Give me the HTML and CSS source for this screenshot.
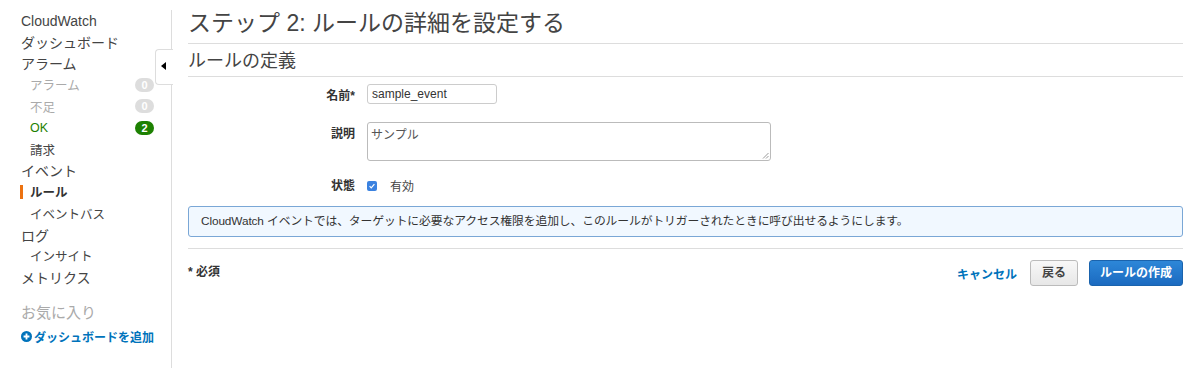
FILE: index.html
```html
<!DOCTYPE html>
<html>
	<head>
		<meta charset="utf-8">
		<title>CloudWatch ルールの詳細</title>
		<link rel="stylesheet" href="styles.css">
	</head>
	<body>
		<div class="page">
			<div class="sidebar">
				<div class="nav top">CloudWatch</div>
				<div class="nav top">ダッシュボード</div>
				<div class="nav top">アラーム</div>
				<div class="nav sub muted">アラーム <span class="badge">0</span></div>
				<div class="nav sub muted">不足 <span class="badge">0</span></div>
				<div class="nav sub ok">OK <span class="badge green">2</span></div>
				<div class="nav sub">請求</div>
				<div class="nav top">イベント</div>
				<div class="nav sub active">ルール</div>
				<div class="nav sub">イベントバス</div>
				<div class="nav top">ログ</div>
				<div class="nav sub">インサイト</div>
				<div class="nav top">メトリクス</div>
				<div class="fav">お気に入り</div>
				<div class="add-dash">
					<svg width="11" height="11" viewBox="0 0 12 12"><circle cx="6" cy="6" r="6" fill="#0073bb"/><path d="M6 2.8v6.4M2.8 6h6.4" stroke="#fff" stroke-width="2"/></svg>
					ダッシュボードを追加
				</div>
				<div class="collapse"><span class="tri"></span></div>
			</div>
			<div class="main">
				<h1>ステップ 2: ルールの詳細を設定する</h1>
				<h2>ルールの定義</h2>
				<div class="form">
					<div class="row">
						<div class="label">名前*</div>
						<div class="input">sample_event</div>
					</div>
					<div class="row desc">
						<div class="label">説明</div>
						<div class="textarea">サンプル
							<svg class="grip" width="7" height="7" viewBox="0 0 7 7"><path d="M6.5 1L1 6.5M6.5 4L4 6.5" stroke="#999" stroke-width="1"/></svg>
						</div>
					</div>
					<div class="row state">
						<div class="label">状態</div>
						<div class="check">
							<svg width="10" height="10" viewBox="0 0 10 10"><rect width="10" height="10" rx="2" fill="#3b82e0"/><path d="M2.6 5.2l1.6 1.6 3.2-3.6" stroke="#fff" stroke-width="1.2" fill="none"/></svg>
							<span>有効</span>
						</div>
					</div>
				</div>
				<div class="info">CloudWatch イベントでは、ターゲットに必要なアクセス権限を追加し、このルールがトリガーされたときに呼び出せるようにします。</div>
				<div class="footer">
					<div class="required">* 必須</div>
					<div class="actions">
						<span class="cancel">キャンセル</span>
						<span class="btn">戻る</span>
						<span class="btn primary">ルールの作成</span>
					</div>
				</div>
			</div>
		</div>
	</body>
</html>
```

FILE: styles.css
```css
body {
	margin: 0;
	background: #ffffff;
	color: #444444;
	font-family: "Liberation Sans", "Noto Sans CJK JP", sans-serif;
}

.page {
	display: flex;
	height: 368px;
}

.sidebar {
	position: relative;
	width: 150px;
	flex-shrink: 0;
	padding: 10px 0 0 21px;
	margin-top: 10px;
	border-right: 1px solid #dddddd;
	box-sizing: content-box;
}

.sidebar .nav {
	display: flex;
	align-items: center;
	height: 21.4px;
	font-size: 14px;
	margin-top: -9px;
	margin-bottom: 9px;
}

.sidebar .nav:first-child {
	margin-top: -10px;
}

.nav.sub {
	font-size: 12.5px;
	padding-left: 9px;
	color: #444444;
}

.nav.muted {
	color: #aaaaaa;
}

.nav.ok {
	color: #1d8102;
}

.nav.active {
	font-weight: bold;
	color: #333333;
	position: relative;
}

.nav.active::before {
	content: "";
	position: absolute;
	left: -1px;
	top: 4px;
	width: 3px;
	height: 14px;
	background: #ec7211;
}

.badge {
	margin-left: auto;
	margin-right: 17px;
	width: 19px;
	height: 14px;
	line-height: 14px;
	border-radius: 7px;
	background: #dddddd;
	color: #ffffff;
	font-size: 11px;
	font-weight: bold;
	text-align: center;
}

.badge.green {
	background: #1d8102;
}

.fav {
	margin-top: 13px;
	font-size: 15px;
	color: #aaaaaa;
}

.add-dash {
	margin-top: 6px;
	display: flex;
	align-items: center;
	gap: 2px;
	font-size: 12px;
	font-weight: bold;
	color: #0073bb;
}

.collapse {
	position: absolute;
	left: 155px;
	top: 39px;
	width: 17px;
	height: 34px;
	background: #ffffff;
	border: 1px solid #dddddd;
	border-right: none;
	border-radius: 4px 0 0 4px;
}

.tri {
	position: absolute;
	left: 5px;
	top: 12px;
	border-top: 4px solid transparent;
	border-bottom: 4px solid transparent;
	border-right: 5px solid #000000;
}

.main {
	width: 995px;
	margin-left: 16px;
}

h1 {
	margin: 0;
	padding-top: 7px;
	font-size: 23px;
	font-weight: normal;
	line-height: 32px;
	color: #444444;
	border-bottom: 1px solid #dddddd;
	padding-bottom: 4px;
}

h2 {
	margin: 0;
	padding-top: 2px;
	font-size: 18px;
	font-weight: normal;
	line-height: 30px;
	color: #444444;
	border-bottom: 1px solid #dddddd;
	padding-bottom: 0;
}

.form {
	padding-top: 7px;
}

.row {
	display: flex;
	align-items: flex-start;
	gap: 12px;
	margin-bottom: 18px;
}

.row.desc {
	margin-bottom: 13px;
}

.label {
	width: 167px;
	text-align: right;
	font-size: 12px;
	font-weight: bold;
	color: #333333;
	padding-top: 2px;
}

.input {
	width: 120px;
	height: 18px;
	line-height: 18px;
	padding: 0 4px;
	border: 1px solid #cccccc;
	border-radius: 3px;
	font-size: 12px;
	color: #333333;
}

.textarea {
	position: relative;
	width: 396px;
	height: 33px;
	padding: 2px 3px;
	border: 1px solid #bbbbbb;
	border-radius: 3px;
	font-size: 12px;
	color: #555555;
}

.grip {
	position: absolute;
	right: 1px;
	bottom: 1px;
}

.row.state {
	margin-bottom: 12px;
}

.check {
	display: flex;
	align-items: center;
	gap: 13px;
	font-size: 12px;
	padding-top: 3px;
	color: #444444;
}

.info {
	border: 1px solid #7aa7d6;
	border-radius: 3px;
	background: #f1f8ff;
	font-size: 11.8px;
	letter-spacing: -0.1px;
	color: #333333;
	padding: 0 12px;
	line-height: 29px;
}

.footer {
	display: flex;
	justify-content: space-between;
	border-top: 1px solid #dddddd;
	margin-top: 11px;
	padding-top: 11px;
}

.required {
	font-size: 12px;
	font-weight: bold;
	color: #333333;
	padding-top: 2px;
}

.actions {
	display: flex;
	align-items: center;
	gap: 11px;
}

.cancel {
	font-size: 12px;
	font-weight: bold;
	color: #0073bb;
	margin-right: 2px;
}

.btn {
	display: inline-block;
	height: 24px;
	line-height: 24px;
	padding: 0 11px;
	border: 1px solid #bbbbbb;
	border-radius: 3px;
	background: linear-gradient(#f8f8f8, #e7e7e7);
	font-size: 12px;
	font-weight: bold;
	color: #444444;
}

.btn.primary {
	padding: 0 10px;
	border-color: #1a63ad;
	background: linear-gradient(#2d87d8, #1b6ac0);
	color: #ffffff;
}
```
